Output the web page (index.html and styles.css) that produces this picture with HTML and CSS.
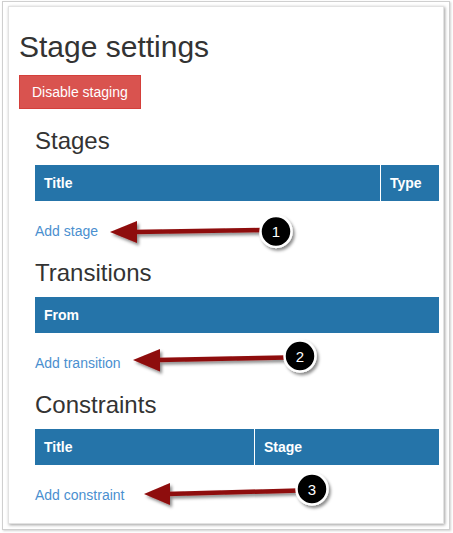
FILE: index.html
```html
<!DOCTYPE html>
<html>
<head>
<meta charset="utf-8">
<link rel="stylesheet" href="styles.css">
</head>
<body>
<div class="frame">
  <div class="card">
    <h1 class="title">Stage settings</h1>
    <div class="btn-row"><button class="btn-danger">Disable staging</button></div>

    <section class="section">
      <h3 class="section-title">Stages</h3>
      <div class="thead cols-stages">
        <div class="th">Title</div>
        <div class="th th-sep">Type</div>
      </div>
      <div class="add"><a class="add-link">Add stage</a></div>
    </section>

    <section class="section">
      <h3 class="section-title">Transitions</h3>
      <div class="thead cols-one">
        <div class="th">From</div>
      </div>
      <div class="add"><a class="add-link">Add transition</a></div>
    </section>

    <section class="section">
      <h3 class="section-title">Constraints</h3>
      <div class="thead cols-constraints">
        <div class="th">Title</div>
        <div class="th th-sep">Stage</div>
      </div>
      <div class="add"><a class="add-link">Add constraint</a></div>
    </section>
  </div>
</div>

<svg class="annotations" width="453" height="533" viewBox="0 0 453 533" xmlns="http://www.w3.org/2000/svg">
  <defs>
    <filter id="sh" x="-30%" y="-50%" width="160%" height="200%">
      <feDropShadow dx="2" dy="2.5" stdDeviation="1.6" flood-color="#000" flood-opacity="0.45"/>
    </filter>
  </defs>
  <g filter="url(#sh)">
    <line x1="134" y1="232" x2="264" y2="230" stroke="#8e0a0a" stroke-width="4.5"/>
    <polygon points="110,232 137,221 137,243" fill="#8e0a0a"/>
    <circle cx="276" cy="231.5" r="15.5" fill="#000" stroke="#fff" stroke-width="2.5"/>
  </g>
  <text class="num" x="276" y="237">1</text>

  <g filter="url(#sh)">
    <line x1="157" y1="360" x2="288" y2="357.5" stroke="#8e0a0a" stroke-width="4.5"/>
    <polygon points="133,360 160,349 160,371.5" fill="#8e0a0a"/>
    <circle cx="300" cy="356" r="15.5" fill="#000" stroke="#fff" stroke-width="2.5"/>
  </g>
  <text class="num" x="300" y="361.5">2</text>

  <g filter="url(#sh)">
    <line x1="167" y1="494" x2="300" y2="490.5" stroke="#8e0a0a" stroke-width="4.5"/>
    <polygon points="144,494 170,483 170,505" fill="#8e0a0a"/>
    <circle cx="312" cy="489" r="15.5" fill="#000" stroke="#fff" stroke-width="2.5"/>
  </g>
  <text class="num" x="312" y="494.5">3</text>
</svg>
</body>
</html>
```

FILE: styles.css
```css
html, body {
  margin: 0;
  padding: 0;
  background: #ffffff;
}

body {
  position: relative;
  width: 453px;
  height: 533px;
  overflow: hidden;
  font-family: "Liberation Sans", Arial, sans-serif;
  color: #333333;
}

.frame {
  margin: 1px 0 0 2px;
  width: 446px;
  height: 527px;
  border: 1px solid #cfcfcf;
  box-shadow: 1px 1px 2px rgba(0, 0, 0, 0.18);
}

.card {
  margin: 4px 0 0 5px;
  width: 420px;
  padding: 0 4px 18px 10px;
  border: 1px solid #e2e2e2;
  box-shadow: 1px 1px 3px rgba(0, 0, 0, 0.38);
  background: #ffffff;
}

.title {
  margin: 23px 0 12px;
  font-size: 30px;
  line-height: 33px;
  font-weight: 400;
  color: #333333;
}

.btn-row {
  display: flex;
}

.btn-danger {
  margin: 0;
  padding: 6px 12px;
  font-family: "Liberation Sans", Arial, sans-serif;
  font-size: 14px;
  line-height: 20px;
  color: #ffffff;
  background: #d9534f;
  border: 1px solid #d43f3a;
  border-radius: 0;
}

.section {
  margin-left: 16px;
}

.section-title {
  margin: 19px 0 11px;
  font-size: 24px;
  line-height: 26.4px;
  font-weight: 400;
  color: #333333;
}

.thead {
  display: grid;
  height: 36px;
  background: #2574a9;
  color: #ffffff;
}

.cols-stages {
  grid-template-columns: 345px 1fr;
}

.cols-one {
  grid-template-columns: 1fr;
}

.cols-constraints {
  grid-template-columns: 219px 1fr;
}

.th {
  padding: 8px 9px;
  font-size: 14px;
  line-height: 20px;
  font-weight: 700;
}

.th-sep {
  border-left: 1px solid #ffffff;
}

.add {
  margin-top: 19.5px;
  font-size: 14px;
  line-height: 20px;
}

.add-link {
  color: #4a8fcf;
  text-decoration: none;
}

.annotations {
  position: absolute;
  left: 0;
  top: 0;
  pointer-events: none;
}

.num {
  font-family: "Liberation Sans", Arial, sans-serif;
  font-size: 15px;
  fill: #ffffff;
  text-anchor: middle;
}
```
